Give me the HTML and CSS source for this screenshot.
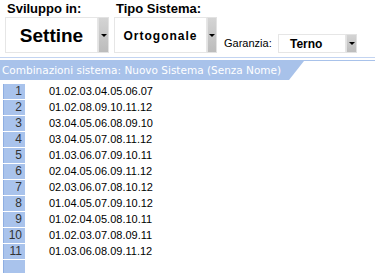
FILE: index.html
```html
<!DOCTYPE html>
<html lang="it">
<head>
    <meta charset="UTF-8">
    <meta name="viewport" content="width=device-width, initial-scale=1.0">
    <title>Combinazioni sistema</title>
    <link rel="stylesheet" href="styles.css">
</head>
<body>

    <div class="top-panel">
        <div class="field field-sviluppo">
            <div class="field-label">Sviluppo in:</div>
            <div class="combo">
                <div class="combo-value value-big">Settine</div>
                <div class="combo-btn"><span class="arrow"></span></div>
            </div>
        </div>

        <div class="field field-tipo">
            <div class="field-label">Tipo Sistema:</div>
            <div class="combo">
                <div class="combo-value value-mid">Ortogonale</div>
                <div class="combo-btn btn-narrow"><span class="arrow"></span></div>
            </div>
        </div>

        <div class="field-garanzia">
            <span class="small-label">Garanzia:</span>
            <div class="combo combo-small">
                <div class="combo-value value-small">Terno</div>
                <div class="combo-btn"><span class="arrow"></span></div>
            </div>
        </div>
    </div>

    <div class="separator"></div>

    <div class="tab-bar">
        <div class="tab">Combinazioni sistema: Nuovo Sistema (Senza Nome)</div>
    </div>

    <div class="combo-list" id="comboList">
        <!-- rows are added by the script below -->
    </div>

    <script>
        const combinazioni = [
            '01.02.03.04.05.06.07',
            '01.02.08.09.10.11.12',
            '03.04.05.06.08.09.10',
            '03.04.05.07.08.11.12',
            '01.03.06.07.09.10.11',
            '02.04.05.06.09.11.12',
            '02.03.06.07.08.10.12',
            '01.04.05.07.09.10.12',
            '01.02.04.05.08.10.11',
            '01.02.03.07.08.09.11',
            '01.03.06.08.09.11.12'
        ];

        // Render the list of combinations
        function renderList(items) {
            const list = document.getElementById('comboList');
            list.innerHTML = '';

            items.forEach((combo, i) => {
                const row = document.createElement('div');
                row.classList.add('row');
                row.innerHTML = `
                    <div class="row-num">${i + 1}</div>
                    <div class="row-text">${combo}</div>
                `;
                list.appendChild(row);
            });

            // empty row at the bottom
            const empty = document.createElement('div');
            empty.classList.add('row', 'row-empty');
            empty.innerHTML = '<div class="row-num"></div>';
            list.appendChild(empty);
        }

        renderList(combinazioni);
    </script>

</body>
</html>
```

FILE: styles.css
```css
body {
    margin: 0;
    padding: 0;
    background: #fff;
    font-family: "Liberation Sans", Arial, sans-serif;
    color: #000;
    overflow: hidden;
}

.top-panel {
    display: flex;
    height: 57px;
}

.field {
    display: flex;
    flex-direction: column;
}

.field-sviluppo {
    margin-left: 5px;
}

.field-tipo {
    margin-left: 5px;
}

.field-label {
    height: 17px;
    line-height: 17px;
    padding-left: 2px;
    font-size: 13px;
    font-weight: bold;
}

.combo {
    display: flex;
    height: 36px;
}

.combo-value {
    width: 91px;
    border: 1px solid #e6e6e6;
    background: #fff;
    display: flex;
    align-items: center;
    font-weight: bold;
}

.value-big {
    justify-content: center;
    font-size: 19px;
    padding-top: 2px;
    box-sizing: border-box;
    width: 93px;
}

.value-mid {
    justify-content: center;
    font-size: 12px;
    letter-spacing: 1px;
    padding-top: 2px;
    box-sizing: border-box;
    width: 93px;
}

.combo-btn {
    width: 11px;
    background: linear-gradient(to bottom, #d4d4d4, #bcbcbc);
    border: 1px solid #e2e2e2;
    box-sizing: border-box;
    display: flex;
    align-items: center;
    justify-content: center;
}

.btn-narrow {
    width: 10px;
}

.arrow {
    width: 0;
    height: 0;
    border-left: 3px solid transparent;
    border-right: 3px solid transparent;
    border-top: 3px solid #000;
}

.field-garanzia {
    display: flex;
    align-items: flex-end;
    margin-left: 7px;
    padding-bottom: 4px;
}

.small-label {
    font-size: 11px;
    width: 54px;
    padding-bottom: 4px;
}

.combo-small {
    height: 19px;
}

.value-small {
    width: 68px;
    box-sizing: border-box;
    font-size: 12px;
    padding-left: 11px;
    padding-top: 1px;
}

.separator {
    height: 1px;
    background: #c3d4f1;
    margin-bottom: 2px;
}

.tab-bar {
    border-top: 1px solid #a8c2ea;
    height: 19px;
}

.tab {
    width: 304px;
    height: 19px;
    background: #a8c2ea;
    clip-path: polygon(0 0, 100% 0, calc(100% - 15px) 100%, 0 100%);
    color: #fff;
    font-family: "DejaVu Sans", Verdana, sans-serif;
    font-size: 10.5px;
    line-height: 19px;
    padding-left: 2px;
    box-sizing: border-box;
    white-space: nowrap;
}

.combo-list {
    margin-top: 4px;
}

.row {
    display: flex;
    height: 15px;
    margin-bottom: 1px;
    font-size: 11px;
    line-height: 15px;
}

.row-num {
    width: 22px;
    margin-left: 3px;
    background: #a9c3ec;
    border-left: 1px solid #8eaee2;
    box-sizing: border-box;
    text-align: right;
    padding-right: 3px;
    color: #333;
    font-size: 12px;
}

.row-text {
    margin-left: 24px;
}

.row-empty {
    height: 20px;
}
```
